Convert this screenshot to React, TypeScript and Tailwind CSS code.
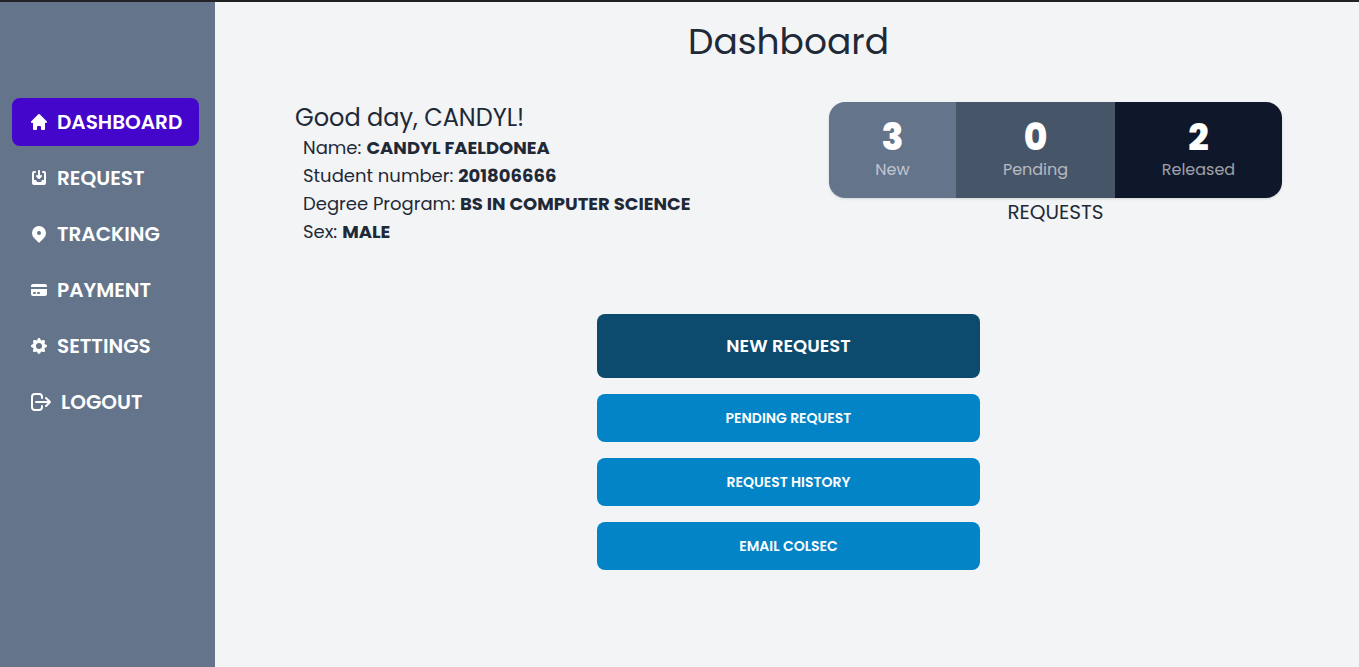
import type { IconType } from "react-icons";
import {
  HiCog,
  HiCreditCard,
  HiHome,
  HiInboxIn,
  HiLocationMarker,
  HiOutlineLogout,
} from "react-icons/hi";

const menu: { label: string; icon: IconType; size: string; active?: boolean }[] = [
  { label: "DASHBOARD", icon: HiHome, size: "size-5", active: true },
  { label: "REQUEST", icon: HiInboxIn, size: "size-5" },
  { label: "TRACKING", icon: HiLocationMarker, size: "size-5" },
  { label: "PAYMENT", icon: HiCreditCard, size: "size-5" },
  { label: "SETTINGS", icon: HiCog, size: "size-5" },
  { label: "LOGOUT", icon: HiOutlineLogout, size: "size-6" },
];

const details = [
  { label: "Name", value: "CANDYL FAELDONEA" },
  { label: "Student number", value: "201806666" },
  { label: "Degree Program", value: "BS IN COMPUTER SCIENCE" },
  { label: "Sex", value: "MALE" },
];

const stats = [
  { value: 3, label: "New", tone: "bg-[#64748b]" },
  { value: 0, label: "Pending", tone: "bg-[#475569]" },
  { value: 2, label: "Released", tone: "bg-[#0f172a]" },
];

const actions = ["PENDING REQUEST", "REQUEST HISTORY", "EMAIL COLSEC"];

export default function App() {
  return (
    <div className="flex min-h-screen border-t-2 border-[#222124] bg-[#f3f4f6] font-['Poppins','Inter',sans-serif] text-[#1f2937]">
      <nav className="w-[215px] shrink-0 bg-[#64748b] px-3 pt-24">
        <ul className="flex flex-col gap-2">
          {menu.map(({ label, icon: Icon, size, active }) => (
            <li key={label}>
              <a
                href="#"
                aria-current={active ? "page" : undefined}
                className={`mr-1 flex h-12 items-center gap-2 rounded-lg pl-[17px] text-xl font-semibold text-white ${
                  active ? "bg-[#4506cb]" : ""
                }`}
              >
                <Icon className={size} aria-hidden="true" />
                {label}
              </a>
            </li>
          ))}
        </ul>
      </nav>

      <main className="flex flex-1 flex-col pt-5 pr-[77px] pl-20">
        <h1 className="text-center text-4xl leading-10">Dashboard</h1>

        <div className="mt-10 flex items-start justify-between">
          <section>
            <h2 className="text-2xl">Good day, CANDYL!</h2>
            <dl className="pl-2 text-lg leading-7">
              {details.map((row) => (
                <div key={row.label} className="flex gap-[5px]">
                  <dt>{row.label}:</dt>
                  <dd className="font-bold">{row.value}</dd>
                </div>
              ))}
            </dl>
          </section>

          <section className="w-[453px]">
            <div className="grid grid-cols-[127fr_159fr_167fr] overflow-hidden rounded-2xl text-center shadow">
              {stats.map((stat) => (
                <div key={stat.label} className={`h-24 pt-4 text-white ${stat.tone}`}>
                  <div className="text-4xl leading-10 font-extrabold">{stat.value}</div>
                  <div className="text-base leading-6 text-white/60">{stat.label}</div>
                </div>
              ))}
            </div>
            <p className="text-center text-xl">REQUESTS</p>
          </section>
        </div>

        <div className="mx-auto mt-[68px] flex w-[383px] flex-col gap-4">
          <button type="button" className="h-16 rounded-lg bg-[#0c4a6e] text-lg font-semibold text-white">
            NEW REQUEST
          </button>
          {actions.map((action) => (
            <button
              key={action}
              type="button"
              className="h-12 rounded-lg bg-[#0284c7] text-sm font-semibold text-white"
            >
              {action}
            </button>
          ))}
        </div>
      </main>
    </div>
  );
}
